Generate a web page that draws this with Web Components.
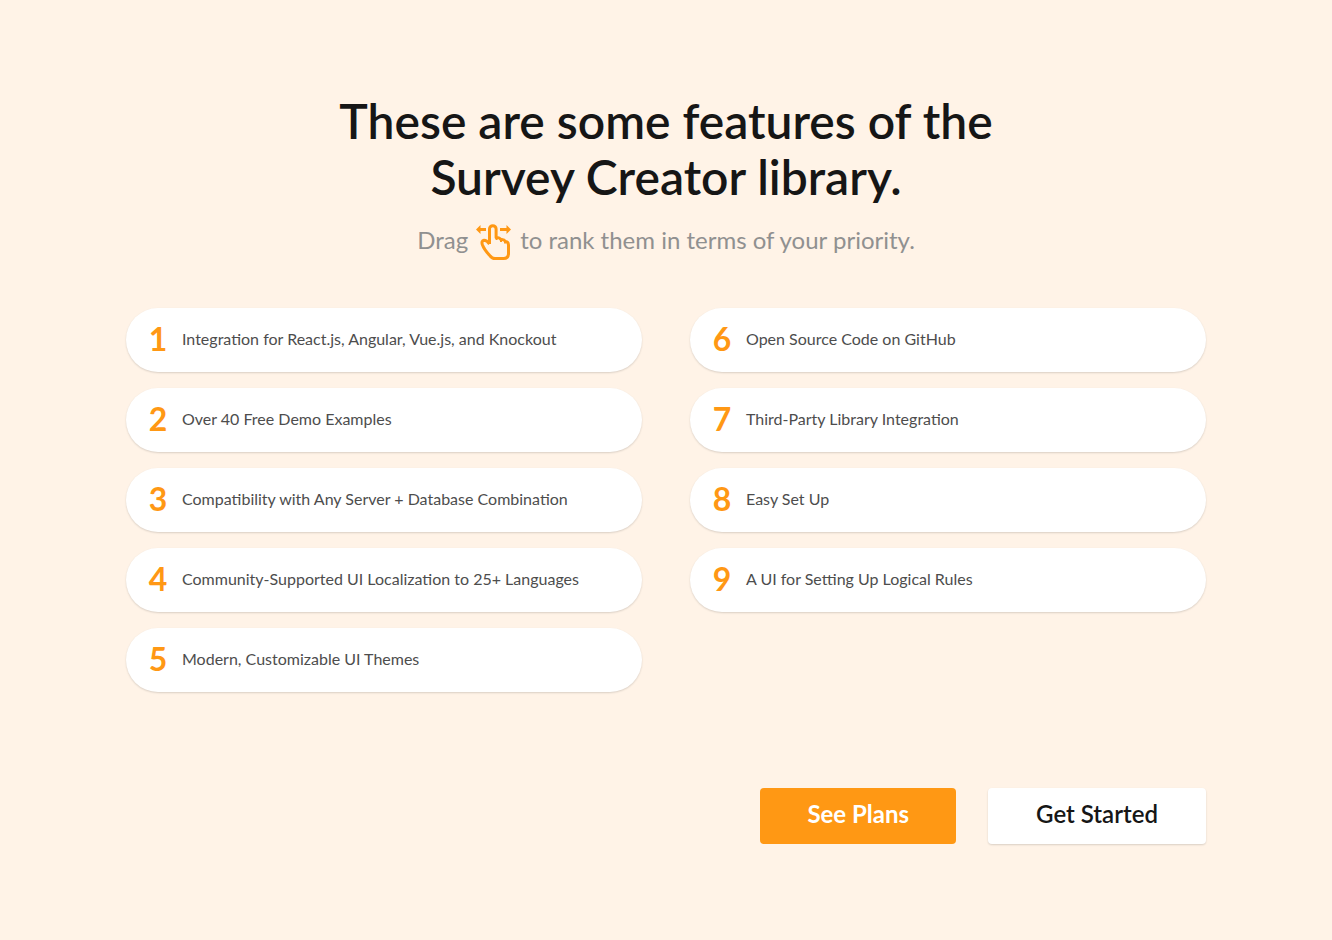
<!DOCTYPE html>
<html lang="en">
<head>
<meta charset="utf-8">
<meta name="viewport" content="width=device-width, initial-scale=1">
<title>Survey Creator features</title>
<style>
body { margin: 0; background: #fff3e7; color: #161616; font-family: Lato, "Open Sans", sans-serif; }
</style>
</head>
<body>
<feature-page>
  <page-heading slot="heading">
    These are some features of the Survey Creator library.
    <span slot="before">Drag</span>
    <drag-icon slot="icon"></drag-icon>
    <span slot="after">to rank them in terms of your priority.</span>
  </page-heading>
  <rank-list>
    <rank-item rank="1">Integration for React.js, Angular, Vue.js, and Knockout</rank-item>
    <rank-item rank="2">Over 40 Free Demo Examples</rank-item>
    <rank-item rank="3">Compatibility with Any Server + Database Combination</rank-item>
    <rank-item rank="4">Community-Supported UI Localization to 25+ Languages</rank-item>
    <rank-item rank="5">Modern, Customizable UI Themes</rank-item>
    <rank-item rank="6">Open Source Code on GitHub</rank-item>
    <rank-item rank="7">Third-Party Library Integration</rank-item>
    <rank-item rank="8">Easy Set Up</rank-item>
    <rank-item rank="9">A UI for Setting Up Logical Rules</rank-item>
  </rank-list>
  <action-button slot="actions" kind="primary">See Plans</action-button>
  <action-button slot="actions">Get Started</action-button>
</feature-page>

<script>
const define = (name, html, setup) => {
  const template = document.createElement('template');
  template.innerHTML = html;
  customElements.define(name, class extends HTMLElement {
    constructor() {
      super();
      this.attachShadow({ mode: 'open' }).append(template.content.cloneNode(true));
    }
    connectedCallback() {
      if (setup) setup(this, this.shadowRoot);
    }
  });
};

define('feature-page', `
  <style>
    :host { display: block; padding: 93px 24px 96px; }
    main { max-width: 1080px; margin: 0 auto; }
    footer { display: flex; flex-wrap: wrap; justify-content: flex-end; gap: 32px; margin-top: 96px; }
  </style>
  <main>
    <slot name="heading"></slot>
    <slot></slot>
    <footer><slot name="actions"></slot></footer>
  </main>`);

define('page-heading', `
  <style>
    :host { display: block; text-align: center; }
    h1 { max-width: 720px; margin: 0 auto; font-size: 48px; line-height: 56px; font-weight: 600; }
    p { display: flex; justify-content: center; align-items: flex-start; gap: 8px; margin: 19px 0 0; color: #909090; font-size: 24px; line-height: 32px; }
  </style>
  <h1><slot></slot></h1>
  <p><slot name="before"></slot><slot name="icon"></slot><slot name="after"></slot></p>`);

define('drag-icon', `
  <style>
    :host { display: block; width: 36px; height: 36px; }
    svg { display: block; }
  </style>
  <svg width="36" height="36" viewBox="0 0 36 36" aria-hidden="true">
    <path fill="#ff9814" d="M0 5.500 4.500 1v3H10v3H4.500v3zM35 5.500 30.500 1v3H24v3h6.500v3z"/>
    <path fill="none" stroke="#ff9814" stroke-width="3" stroke-linejoin="round" d="M13.500 20V5a3.300 3.300 0 0 1 6.600 0v8.500q3-.500 4.900 2 3-.500 4.500 2 3 .300 3 3.500V29.500q0 5-5 5H19q-3 0-4.800-2.500Q8 25.500 6.300 20.500 5.200 16.800 8 16.200q2.500-.200 5.500 3.800"/>
    <path fill="none" stroke="#ff9814" stroke-width="2" d="M20.600 13v3M25 15v3M29 17v2.500"/>
  </svg>`);

define('rank-list', `
  <style>
    :host { display: block; margin-top: 48px; }
    div { display: grid; grid-auto-flow: column; grid-template-rows: repeat(5, auto); grid-auto-columns: minmax(0, 1fr); gap: 16px 48px; }
    @media (max-width: 800px) {
      div { grid-auto-flow: row; grid-template-rows: none; }
    }
  </style>
  <div role="list"><slot></slot></div>`);

define('rank-item', `
  <style>
    :host { display: flex; align-items: center; gap: 14px; box-sizing: border-box; min-height: 64px; padding: 7px 22px 9px; border-radius: 32px; background: #fff; box-shadow: 0 1px 2px rgba(0, 0, 0, .15); color: #4d4d4d; font-size: 16px; line-height: 24px; cursor: grab; }
    b { flex: none; width: 20px; color: #ff9814; font-size: 32px; line-height: 48px; font-weight: 700; text-align: center; }
  </style>
  <b></b><span><slot></slot></span>`, (host, root) => {
    host.setAttribute('role', 'listitem');
    root.querySelector('b').textContent = host.getAttribute('rank');
  });

define('action-button', `
  <style>
    :host { display: block; }
    button { display: block; box-sizing: border-box; margin: 0; padding: 10px 48px 14px; border: 0; border-radius: 4px; background: #fff; box-shadow: 0 1px 2px rgba(0, 0, 0, .15); color: #161616; font-family: inherit; font-size: 24px; line-height: 32px; font-weight: 600; cursor: pointer; }
    :host([kind="primary"]) button { padding-inline: 47px; background: #ff9814; box-shadow: none; color: #fff; font-weight: 700; }
  </style>
  <button type="button"><slot></slot></button>`);
</script>
</body>
</html>
